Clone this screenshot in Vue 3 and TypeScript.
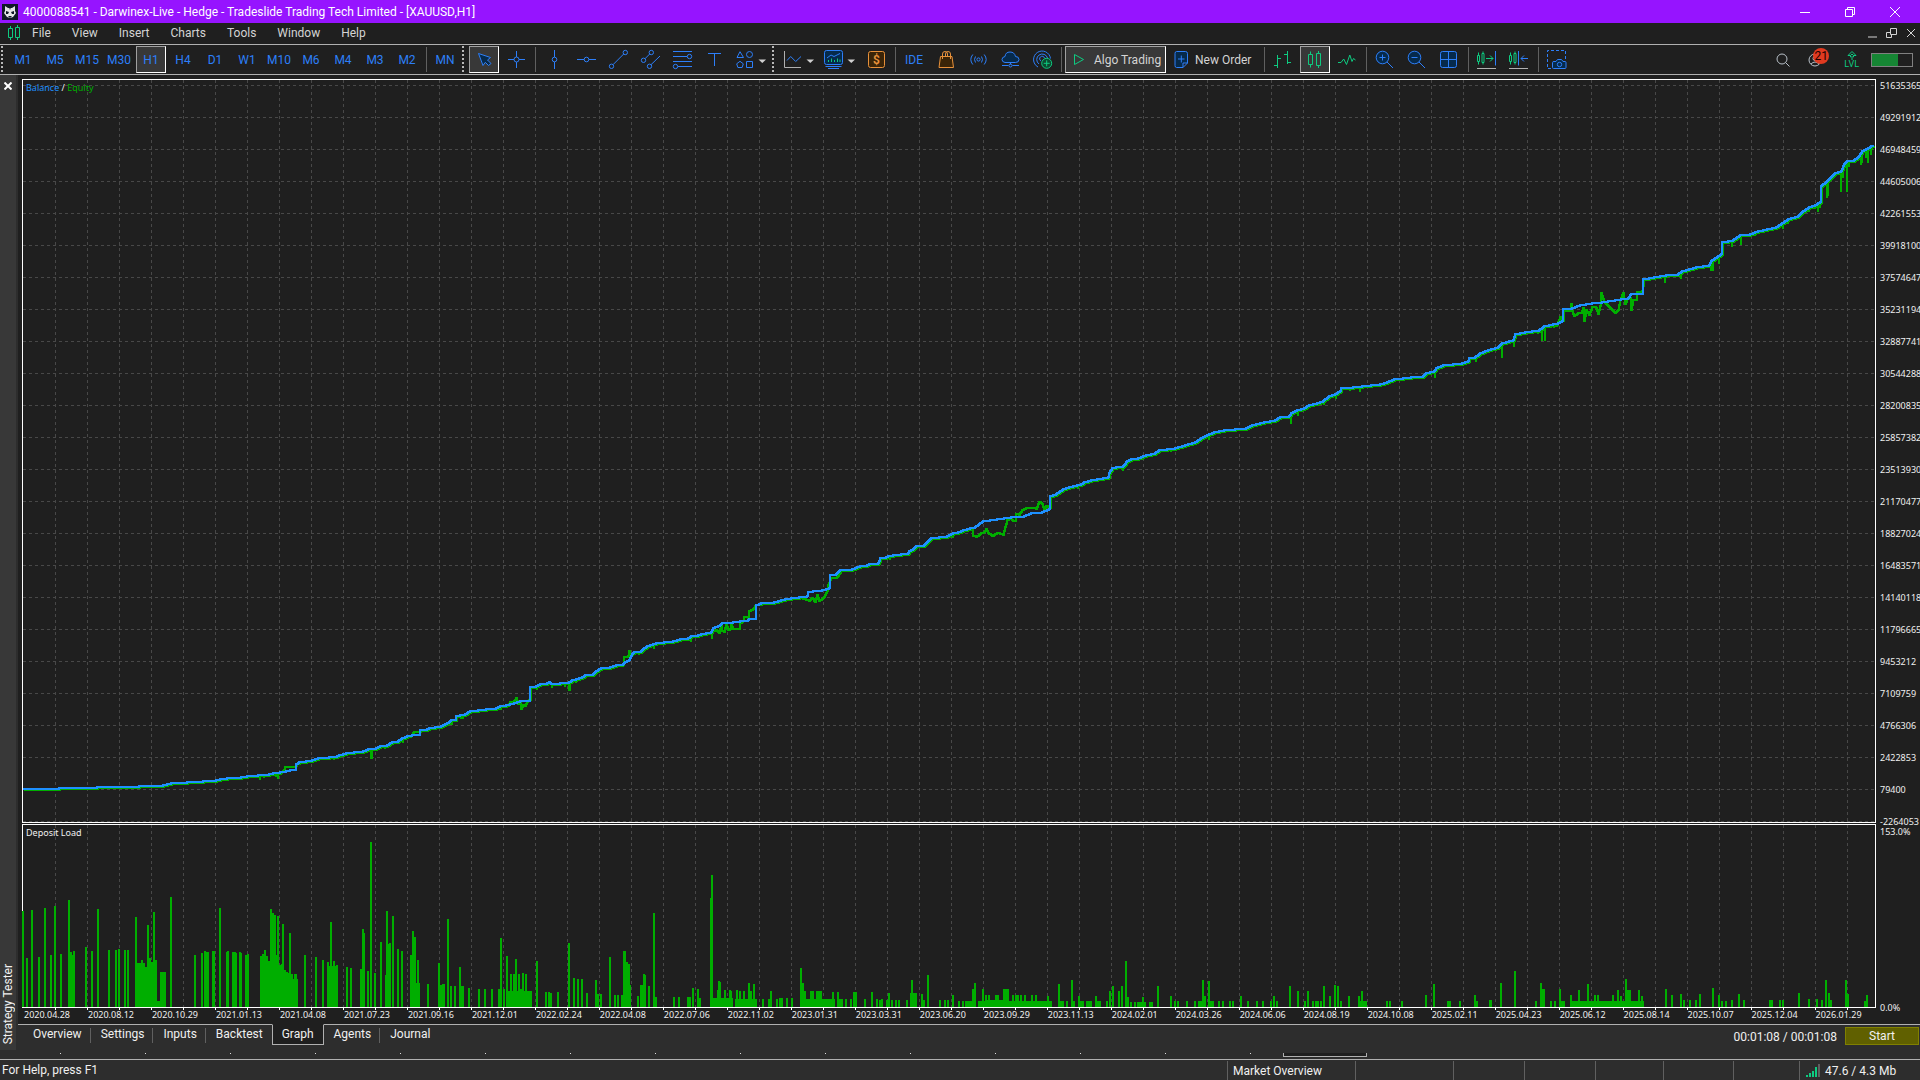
<script setup lang="ts">
type Point = [number, number]

const menus = ['File', 'View', 'Insert', 'Charts', 'Tools', 'Window', 'Help']
const timeframes = ['M1', 'M5', 'M15', 'M30', 'H1', 'H4', 'D1', 'W1', 'M10', 'M6', 'M4', 'M3', 'M2']
const tabs = ['Overview', 'Settings', 'Inputs', 'Backtest', 'Graph', 'Agents', 'Journal']

const scale = [
  51635365, 49291912, 46948459, 44605006, 42261553, 39918100, 37574647, 35231194, 32887741, 30544288, 28200835,
  25857382, 23513930, 21170477, 18827024, 16483571, 14140118, 11796665, 9453212, 7109759, 4766306, 2422853, 79400,
  -2264053,
]
const dates = [
  '2020.04.28', '2020.08.12', '2020.10.29', '2021.01.13', '2021.04.08', '2021.07.23', '2021.09.16', '2021.12.01',
  '2022.02.24', '2022.04.08', '2022.07.06', '2022.11.02', '2023.01.31', '2023.03.31', '2023.06.20', '2023.09.29',
  '2023.11.13', '2024.02.01', '2024.03.26', '2024.06.06', '2024.08.19', '2024.10.08', '2025.02.11', '2025.04.23',
  '2025.06.12', '2025.08.14', '2025.10.07', '2025.12.04', '2026.01.29',
]

const columns = Array.from({ length: 58 }, (_, i) => 55.5 + i * 32).filter((x) => x < 1875)
const rows = Array.from({ length: 24 }, (_, i) => 85.5 + i * 32)

const balance: Point[] = [
  [23, 789], [58, 789], [59, 788], [97, 787], [139, 786], [163, 785], [167, 784], [171, 783], [187, 782], [203, 781],
  [216, 780], [220, 779], [227, 778], [241, 777], [247, 776], [258, 775], [269, 774], [273, 773], [280, 772],
  [286, 771], [290, 770], [296, 770], [296, 764], [299, 762], [306, 761], [312, 760], [318, 758], [329, 757],
  [337, 756], [339, 755], [346, 753], [354, 752], [363, 751], [368, 749], [376, 748], [380, 746], [387, 745],
  [392, 742], [398, 741], [402, 738], [407, 736], [412, 735], [419, 735], [420, 730], [427, 729], [429, 728],
  [435, 727], [441, 726], [445, 724], [449, 722], [451, 720], [456, 720], [456, 716], [460, 715], [465, 714],
  [470, 711], [478, 710], [486, 709], [496, 708], [500, 706], [506, 705], [514, 703], [520, 701], [530, 701],
  [530, 687], [536, 686], [540, 684], [547, 683], [549, 682], [551, 684], [560, 683], [569, 682], [572, 680],
  [576, 679], [582, 677], [585, 675], [593, 674], [596, 671], [601, 668], [610, 667], [616, 665], [623, 664],
  [625, 662], [629, 660], [632, 654], [634, 652], [640, 652], [643, 649], [647, 646], [656, 643], [664, 642],
  [673, 641], [680, 639], [688, 638], [691, 636], [698, 635], [701, 634], [711, 632], [713, 628], [720, 625],
  [722, 623], [733, 622], [740, 621], [748, 620], [749, 619], [756, 618], [756, 605], [761, 603], [774, 602],
  [785, 599], [791, 598], [799, 597], [807, 596], [808, 592], [813, 591], [822, 590], [829, 588], [830, 575],
  [836, 574], [840, 570], [852, 569], [860, 566], [867, 565], [869, 564], [878, 563], [880, 558], [886, 557],
  [888, 556], [893, 555], [908, 553], [909, 551], [913, 549], [916, 546], [924, 545], [929, 540], [931, 538],
  [947, 536], [953, 533], [958, 532], [963, 530], [970, 528], [975, 527], [979, 524], [983, 521], [990, 520],
  [997, 519], [1011, 517], [1024, 516], [1031, 513], [1042, 512], [1049, 509], [1050, 496], [1056, 494],
  [1063, 489], [1069, 487], [1081, 484], [1084, 482], [1091, 480], [1097, 479], [1108, 477], [1109, 473],
  [1112, 468], [1116, 467], [1123, 466], [1127, 461], [1131, 459], [1138, 458], [1146, 455], [1155, 453],
  [1159, 450], [1175, 448], [1185, 445], [1195, 442], [1201, 438], [1209, 434], [1214, 432], [1224, 430],
  [1246, 428], [1252, 425], [1264, 422], [1275, 420], [1280, 417], [1289, 416], [1291, 413], [1297, 410],
  [1304, 408], [1309, 405], [1317, 403], [1323, 401], [1329, 396], [1335, 394], [1340, 391], [1341, 388],
  [1353, 387], [1362, 386], [1380, 384], [1387, 382], [1394, 379], [1411, 377], [1423, 376], [1426, 373],
  [1434, 371], [1436, 368], [1443, 365], [1462, 363], [1468, 361], [1469, 358], [1475, 357], [1480, 353],
  [1488, 350], [1498, 347], [1502, 343], [1509, 341], [1513, 340], [1515, 334], [1525, 332], [1539, 330],
  [1544, 326], [1558, 323], [1562, 321], [1563, 309], [1572, 308], [1580, 305], [1592, 303], [1602, 302],
  [1621, 299], [1628, 298], [1631, 294], [1643, 293], [1643, 279], [1654, 277], [1666, 275], [1678, 274],
  [1682, 271], [1696, 267], [1709, 265], [1711, 261], [1718, 256], [1721, 254], [1722, 242], [1733, 240],
  [1740, 235], [1747, 235], [1758, 231], [1776, 227], [1784, 222], [1788, 219], [1798, 216], [1803, 211],
  [1809, 207], [1815, 205], [1820, 202], [1821, 186], [1827, 181], [1835, 173], [1841, 171], [1844, 164],
  [1847, 161], [1854, 160], [1859, 156], [1862, 151], [1868, 148], [1873, 145],
]

// Stretches where floating profit pulls equity away from the balance curve.
const divergences: Point[][] = [
  [[281, 773], [284, 770], [285, 767], [295, 767], [297, 764]],
  [[411, 736], [414, 732], [421, 731]],
  [[508, 706], [510, 702], [514, 701], [516, 698], [518, 704], [520, 703], [521, 709], [523, 705], [525, 706], [527, 702], [529, 700], [531, 700], [531, 688]],
  [[622, 666], [624, 664], [624, 657], [628, 656], [629, 651], [630, 657], [633, 654]],
  [[713, 631], [716, 630], [719, 633], [721, 625], [722, 631], [724, 632], [726, 624], [728, 630], [730, 629], [731, 625], [733, 629], [739, 629], [740, 623], [743, 621], [744, 617], [748, 618], [749, 611], [753, 609], [756, 605], [758, 605]],
  [[800, 598], [803, 599], [809, 601], [812, 598], [815, 602], [817, 595], [819, 601], [824, 597], [827, 591], [828, 585], [831, 578], [837, 577], [841, 571]],
  [[971, 530], [973, 530], [973, 536], [976, 537], [981, 533], [984, 532], [986, 529], [988, 533], [992, 536], [997, 533], [1003, 535], [1005, 527], [1007, 520], [1011, 518], [1013, 521], [1015, 521], [1016, 514], [1019, 515], [1022, 510], [1026, 508], [1032, 508], [1036, 509], [1039, 502], [1042, 504], [1044, 509], [1046, 506], [1050, 508], [1051, 497]],
  [[1557, 325], [1560, 317], [1563, 321], [1564, 311], [1570, 311], [1571, 304], [1572, 311], [1574, 316], [1578, 313], [1581, 313], [1583, 308], [1584, 321], [1586, 310], [1589, 315], [1592, 307], [1596, 308], [1598, 314], [1600, 306], [1601, 293], [1604, 302], [1609, 307], [1613, 311], [1615, 313], [1618, 310], [1620, 300], [1623, 293], [1625, 304], [1627, 299], [1630, 298], [1631, 310], [1633, 300], [1636, 300], [1637, 292], [1642, 291], [1644, 280]],
]

const dips: Point[] = [
  [260, 780], [264, 778], [276, 777], [278, 779], [307, 764], [324, 760], [334, 760], [371, 759], [372, 759], [385, 749],
  [399, 744], [403, 743], [452, 725], [461, 719], [463, 719], [501, 710], [537, 690], [552, 688], [565, 687],
  [569, 691], [570, 691], [576, 683], [593, 677], [639, 655], [654, 649], [691, 642], [712, 639], [890, 560],
  [953, 538], [1078, 489], [1123, 471], [1171, 452], [1209, 440], [1291, 424], [1298, 416], [1324, 405], [1336, 399],
  [1350, 391], [1360, 392], [1435, 378], [1476, 362], [1502, 358], [1514, 347], [1538, 334], [1542, 341], [1545, 341],
  [1554, 328], [1665, 283], [1681, 279], [1711, 271], [1713, 271], [1719, 264], [1732, 247], [1741, 245], [1755, 236],
  [1777, 230], [1783, 229], [1788, 224], [1798, 218], [1803, 215], [1809, 212], [1815, 209], [1818, 212], [1820, 208],
  [1827, 198], [1828, 196], [1833, 178], [1841, 192], [1843, 178], [1847, 192], [1849, 167], [1856, 162], [1861, 165],
  [1862, 163], [1866, 158], [1868, 163], [1871, 155], [1872, 150],
]

function heightAt(x: number): number {
  const next = balance.findIndex((p) => p[0] >= x)
  if (next <= 0) return balance[0][1]
  const [x0, y0] = balance[next - 1]
  const [x1, y1] = balance[next]
  return x1 === x0 ? y1 : y0 + ((y1 - y0) * (x - x0)) / (x1 - x0)
}

function toStairs(points: Point[]): string {
  let path = `M${points[0][0]} ${points[0][1]}`
  for (let i = 1; i < points.length; i++) {
    const [x0, y0] = points[i - 1]
    const dx = points[i][0] - x0
    const dy = points[i][1] - y0
    const steps = Math.max(1, Math.min(Math.abs(dx), Math.abs(dy)))
    for (let k = 1; k <= steps; k++) {
      path += `H${Math.round(x0 + (dx * k) / steps)}V${Math.round(y0 + (dy * k) / steps)}`
    }
  }
  return path
}

const following = balance
  .filter(([x]) => !divergences.some((d) => x >= d[0][0] && x <= d[d.length - 1][0]))
  .map(([x, y]): Point => [x + 1, y + 1])
const equity = [...following, ...divergences.flat()].sort((a, b) => a[0] - b[0])

const balancePath = toStairs(balance)
const equityPath = toStairs(equity) + dips.map(([x, y]) => `M${x} ${Math.round(heightAt(x))}V${y}`).join('')

// Deposit load: [x, height] for single bars, [from, to, height] for solid stretches.
const loads: Point[] = [
  [22, 96], [26, 49], [31, 97], [38, 50], [44, 99], [50, 52], [54, 101], [60, 53], [68, 107], [70, 55], [73, 56],
  [85, 60], [91, 56], [97, 98], [108, 57], [115, 57], [118, 58], [124, 57], [127, 57], [135, 90], [137, 44],
  [139, 44], [141, 47], [143, 44], [147, 82], [149, 49], [151, 45], [153, 95], [155, 47], [170, 110], [194, 52],
  [201, 54], [204, 56], [212, 56], [213, 56], [219, 99], [226, 55], [227, 56], [232, 55], [234, 55], [235, 54],
  [239, 55], [240, 54], [245, 52], [247, 53], [260, 51], [262, 53], [264, 57], [266, 51], [268, 46], [270, 98],
  [272, 94], [274, 92], [276, 52], [277, 91], [279, 42], [281, 43], [282, 83], [284, 37], [286, 35], [288, 34],
  [289, 74], [291, 33], [294, 33], [295, 33], [304, 52], [315, 50], [322, 47], [327, 45], [330, 85], [333, 46],
  [336, 42], [346, 40], [350, 39], [360, 38], [362, 78], [363, 74], [367, 36], [370, 165], [374, 34], [380, 65],
  [385, 32], [386, 96], [388, 63], [389, 64], [392, 91], [397, 58], [401, 56], [410, 52], [412, 76], [414, 70],
  [417, 47], [427, 23], [438, 44], [440, 22], [442, 23], [443, 23], [447, 88], [450, 21], [454, 21], [459, 40],
  [461, 21], [462, 21], [468, 19], [478, 18], [484, 18], [491, 18], [498, 18], [500, 69], [503, 18], [506, 51],
  [510, 33], [513, 33], [515, 48], [518, 33], [520, 18], [522, 34], [525, 33], [536, 46], [545, 15], [548, 15],
  [550, 14], [557, 15], [568, 64], [573, 29], [577, 28], [581, 28], [586, 14], [595, 27], [597, 13], [600, 13],
  [609, 50], [614, 12], [617, 12], [621, 12], [623, 56], [624, 56], [626, 45], [628, 43], [629, 22], [637, 11],
  [640, 22], [641, 22], [643, 33], [644, 32], [648, 21], [653, 94], [655, 10], [673, 10], [678, 10], [687, 10],
  [689, 10], [692, 19], [697, 18], [699, 9], [710, 109], [711, 132], [717, 17], [718, 26], [719, 25], [724, 17],
  [729, 17], [730, 16], [736, 17], [739, 16], [743, 16], [748, 24], [750, 16], [753, 23], [762, 8], [768, 8],
  [770, 16], [776, 8], [779, 9], [781, 9], [786, 9], [791, 9], [800, 39], [802, 24], [804, 16], [810, 16],
  [812, 16], [816, 16], [818, 16], [820, 16], [832, 15], [837, 15], [839, 8], [841, 8], [845, 8], [850, 8],
  [853, 15], [855, 15], [864, 8], [871, 15], [876, 8], [879, 7], [881, 8], [886, 7], [888, 14], [891, 7], [895, 7],
  [898, 7], [906, 7], [910, 14], [911, 27], [913, 14], [915, 14], [921, 13], [923, 7], [927, 32], [939, 7],
  [944, 7], [947, 7], [952, 12], [958, 6], [962, 6], [972, 18], [974, 24], [982, 18], [985, 12], [988, 12],
  [995, 12], [997, 12], [1003, 18], [1005, 18], [1007, 18], [1012, 12], [1015, 12], [1017, 12], [1020, 12],
  [1024, 12], [1031, 12], [1035, 12], [1047, 11], [1058, 23], [1060, 6], [1062, 6], [1066, 6], [1071, 27],
  [1073, 6], [1078, 11], [1080, 6], [1082, 6], [1086, 6], [1088, 6], [1090, 6], [1095, 11], [1097, 6], [1099, 6],
  [1106, 6], [1109, 16], [1112, 21], [1118, 16], [1121, 21], [1125, 46], [1127, 10], [1130, 5], [1134, 5],
  [1142, 10], [1149, 5], [1151, 5], [1157, 21], [1170, 11], [1174, 6], [1177, 6], [1186, 6], [1194, 6], [1198, 6],
  [1200, 6], [1202, 27], [1204, 11], [1208, 26], [1210, 6], [1212, 6], [1218, 6], [1222, 6], [1229, 6], [1232, 6],
  [1240, 11], [1247, 6], [1256, 6], [1262, 6], [1270, 6], [1273, 11], [1276, 6], [1289, 21], [1297, 16], [1304, 6],
  [1307, 16], [1312, 6], [1315, 6], [1317, 6], [1320, 6], [1323, 21], [1329, 11], [1334, 22], [1337, 21], [1340, 6],
  [1348, 11], [1358, 11], [1361, 16], [1386, 6], [1389, 6], [1401, 6], [1425, 12], [1433, 23], [1447, 6], [1449, 6],
  [1459, 6], [1474, 12], [1476, 6], [1489, 7], [1490, 7], [1500, 24], [1514, 36], [1535, 6], [1540, 24], [1542, 18],
  [1543, 18], [1550, 6], [1554, 6], [1559, 18], [1561, 6], [1563, 6], [1570, 12], [1578, 17], [1587, 23],
  [1594, 12], [1597, 12], [1612, 12], [1617, 17], [1620, 11], [1625, 28], [1627, 17], [1629, 17], [1638, 17],
  [1641, 11], [1665, 18], [1671, 12], [1680, 13], [1683, 7], [1689, 7], [1695, 7], [1699, 13], [1712, 19],
  [1718, 12], [1721, 6], [1725, 6], [1731, 7], [1738, 13], [1743, 7], [1769, 7], [1771, 7], [1779, 7], [1782, 7],
  [1798, 14], [1808, 8], [1816, 8], [1821, 7], [1825, 27], [1828, 14], [1830, 7], [1845, 27], [1847, 13], [1864, 6],
  [1866, 12],
]
const plateaus: [number, number, number][] = [
  [68, 75, 52], [135, 157, 40], [157, 160, 6], [160, 166, 35], [204, 209, 55], [260, 298, 28], [327, 338, 41],
  [410, 420, 24], [506, 532, 16], [712, 733, 9], [735, 757, 8], [806, 835, 8], [965, 974, 6], [978, 987, 6],
  [987, 1009, 7], [1009, 1052, 6], [1137, 1146, 5], [1359, 1367, 6], [1570, 1644, 6],
]
const loadPath =
  loads.map(([x, h]) => `M${x} 1007v-${h}h2v${h}z`).join('') +
  plateaus.map(([a, b, h]) => `M${a} 1007v-${h}h${b - a}v${h}z`).join('')

const hiddenTabMarks = Array.from({ length: 15 }, (_, i) => i)
const emptyCells = [98, 71, 71, 68, 70, 66]
</script>

<template>
  <div class="terminal">
    <header class="title-bar">
      <svg class="logo" width="16" height="16" viewBox="0 0 16 16" aria-hidden="true">
        <rect width="16" height="16" fill="#101828" />
        <path d="M3 2l3 2h4l3-2v5l1 2-3 4-3 1-3-1-3-4 1-2z" fill="#e4e4e8" />
        <path d="M4 7l3 1-1 2H4zM12 7L9 8l1 2h2zM6 12h4l-2 2zM7 3h2l-1 3z" fill="#101828" />
      </svg>
      <h1>4000088541 - Darwinex-Live - Hedge - Tradeslide Trading Tech Limited - [XAUUSD,H1]</h1>
      <div class="window-controls">
        <button aria-label="Minimize"><svg width="12" height="12"><path d="M1 6.5h10" /></svg></button>
        <button aria-label="Restore"><svg width="12" height="12"><path d="M1.5 3.500h7v7h-7zM3.500 3.500v-2h7v7h-2" /></svg></button>
        <button aria-label="Close"><svg width="12" height="12"><path d="M1 1l10 10M11 1L1 11" /></svg></button>
      </div>
    </header>

    <nav class="menu-bar">
      <svg class="menu-logo" width="12" height="16" viewBox="0 0 12 16" aria-hidden="true">
        <path d="M.5 3.500h4v9h-4zM2.500 1v2.500M2.500 12.500V15M7.500 2.500h4v10h-4zM9.500 0v2.500M9.500 12.500V15" />
      </svg>
      <button v-for="menu in menus" :key="menu">{{ menu }}</button>
      <div class="child-controls">
        <button aria-label="Minimize chart"><svg width="10" height="10"><path d="M1 9h9" /></svg></button>
        <button aria-label="Restore chart"><svg width="11" height="11"><path d="M4.500.5h6v6h-6zM4.500 4.500h-4v5h5v-3" /></svg></button>
        <button aria-label="Close chart"><svg width="10" height="10"><path d="M1 1l8 8M9 1L1 9" /></svg></button>
      </div>
    </nav>

    <div class="toolbar">
      <i class="grip"></i>
      <button v-for="tf in timeframes" :key="tf" class="tool" :class="{ pressed: tf === 'H1' }">{{ tf }}</button>
      <i class="divider"></i>
      <button class="tool">MN</button>
      <i class="grip"></i>
      <button class="tool pressed" aria-label="Cursor">
        <svg viewBox="1 1 28 25"><path class="fill" d="M9.500 7.500l12 4-3 2.500 3.500 3.500-2.500 2-3.200-3.200-2.300 3.200z" /></svg>
      </button>
      <button class="tool" aria-label="Crosshair">
        <svg viewBox="1 1 28 25"><path d="M15.500 5v6M15.500 16v6M7 13.500h6M18 13.500h6" /><circle cx="15.500" cy="13.500" r="2.500" /></svg>
      </button>
      <i class="divider"></i>
      <button class="tool" aria-label="Vertical line">
        <svg viewBox="1 1 28 25"><path d="M15.500 4v7M15.500 16v7" /><circle cx="15.500" cy="13.500" r="2.300" /></svg>
      </button>
      <button class="tool" aria-label="Horizontal line">
        <svg viewBox="1 1 28 25"><path d="M6 13.500h7M18 13.500h7" /><circle cx="15.500" cy="13.500" r="2.300" /></svg>
      </button>
      <button class="tool" aria-label="Trendline">
        <svg viewBox="1 1 28 25"><path d="M10 18.700L20.700 8" /><circle cx="8.500" cy="20.300" r="2.200" /><circle cx="22.300" cy="6.500" r="2.200" /></svg>
      </button>
      <button class="tool" aria-label="Channel">
        <svg viewBox="1 1 28 25"><path d="M10 12.700L14.700 8M16 18.700l9-8.700" /><circle cx="8.500" cy="14.300" r="2.200" /><circle cx="16.300" cy="6.500" r="2.200" /><circle cx="14.500" cy="20.300" r="2.200" /></svg>
      </button>
      <button class="tool" aria-label="Fibonacci">
        <svg viewBox="1 1 28 25"><path d="M6 5.500h19M6 10.500h14M6 15.500h19M11 20.500h14" /><circle cx="22.500" cy="10.500" r="2.200" /><circle cx="8.500" cy="20.500" r="2.200" /></svg>
      </button>
      <button class="tool" aria-label="Text">
        <svg viewBox="1 1 28 25"><path d="M9 7.500h13M15.500 7.500V20" /></svg>
      </button>
      <button class="tool drop" aria-label="Shapes">
        <svg viewBox="1 1 37 25"><path d="M9 5.700L6 11.500h6.500zM15.500 15.500h6v6h-6zM9 15.300l3.300 2.500-1.200 3.700H6.900l-1.200-3.700z" /><circle cx="18.500" cy="8.500" r="3" /><path class="caret" d="M27.500 13.500h7.500L31.300 17z" /></svg>
      </button>
      <i class="grip"></i>
      <button class="tool drop" aria-label="Chart type">
        <svg viewBox="1 1 37 25"><path class="grey" d="M5.500 5v16.500H22" /><path d="M8 14.500l3.700-4 5 5 5.300-5" /><path class="caret" d="M27.500 13.500h7.500L31.300 17z" /></svg>
      </button>
      <button class="tool drop" aria-label="Indicators">
        <svg viewBox="1 1 37 25"><rect class="fill" x="4.500" y="4.500" width="18" height="14" rx="2" /><path d="M5.500 20.500h16M8 22.500h11M7 12l4-3 3 1.500L20 7.500" /><path class="green" d="M8.500 14v2M11.500 12.500v3.500M14.500 14v2M17.500 12.500v3.500M20 13.500v2.500" /><path class="caret" d="M27.500 13.500h7.500L31.300 17z" /></svg>
      </button>
      <button class="tool" aria-label="Market depth">
        <svg viewBox="1 1 28 25" class="orange"><rect x="7.500" y="5.500" width="16" height="16" rx="2" /><text x="15.500" y="18" text-anchor="middle">$</text></svg>
      </button>
      <i class="divider"></i>
      <button class="tool">IDE</button>
      <button class="tool" aria-label="Market">
        <svg viewBox="1 1 28 25" class="orange"><path d="M9.500 10.500h11.500l1.500 11h-14.500z" /><path class="handles" d="M11.500 13V8q0-2.500 2.500-2.500T16.500 8v2M14.500 10V8q0-2.500 2.500-2.500T19.500 8v5" /></svg>
      </button>
      <button class="tool" aria-label="Signals">
        <svg viewBox="1 1 28 25"><circle cx="15.500" cy="13.500" r="1.600" /><path d="M12.500 10.500q-2 3 0 6M18.500 10.500q2 3 0 6M9.800 8.500q-4 5 0 10M21.200 8.500q4 5 0 10" /></svg>
      </button>
      <button class="tool" aria-label="Virtual hosting">
        <svg viewBox="1 1 28 25"><path class="fill" d="M10 16.500q-3-.5-3-3t3-3q.5-4.500 5-4.500t5.500 4.500q3.500 0 3.500 3t-3.500 3z" /><path d="M15.500 16.500v2M7 19.500h6.500M17.500 19.500H24" /><circle cx="15.500" cy="19.500" r="1.500" /></svg>
      </button>
      <button class="tool" aria-label="Copy trading">
        <svg viewBox="1 1 28 25"><path d="M11 21a8.500 8.500 0 1 1 12.500-8.500M12 18a5.500 5.500 0 1 1 8.500-6M14 15a2.500 2.500 0 1 1 3.500-3" /><g class="green"><circle cx="19.700" cy="17.300" r="5" fill="#0c4a30" /><path d="M16.700 17.300h6M19.700 14.300v6" /></g></svg>
      </button>
      <i class="divider"></i>
      <button class="tool wide algo pressed">
        <svg viewBox="1 1 28 25" class="green"><path d="M9.500 8.500v10l9-5z" /></svg>
        <span>Algo Trading</span>
      </button>
      <button class="tool wide order">
        <svg viewBox="1 1 26 25"><path class="fill" d="M8.500 5.500h9q2 0 2 2V17l-4.500 4.500H8.500q-1.500 0-1.500-2v-12q0-2 1.500-2zM19.500 17H15v4.500" /><path d="M13.300 9.500v7M10 13h6.500" /></svg>
        <span>New Order</span>
      </button>
      <i class="divider"></i>
      <button class="tool" aria-label="Bars">
        <svg viewBox="1 1 28 25" class="green"><path d="M9.500 9v13M6 19.500h3.500M9.500 12.500h3.500M19.500 5v13M16 8.500h3.500M19.500 16.500h3.500" /></svg>
      </button>
      <button class="tool pressed" aria-label="Candlesticks">
        <svg viewBox="1 1 28 25" class="green"><path d="M8.500 8.500h4v10h-4zM10.500 5.500v3M10.500 18.500v3M16.500 7.500h4v12h-4zM18.500 5v2.500M18.500 19.500V22" /></svg>
      </button>
      <button class="tool" aria-label="Line chart">
        <svg viewBox="1 1 28 25" class="green"><path d="M6 16.500h3l2.700-3.500 2.800 5.500 3.300-9.500 2.200 6.500 1.500-3 2 1.500" /></svg>
      </button>
      <i class="divider"></i>
      <button class="tool" aria-label="Zoom in">
        <svg viewBox="1 1 28 25"><circle class="fill" cx="12.500" cy="11.500" r="6.300" /><path d="M17 16l6 6M9.500 11.500h6M12.500 8.500v6" /></svg>
      </button>
      <button class="tool" aria-label="Zoom out">
        <svg viewBox="1 1 28 25"><circle class="fill" cx="12.500" cy="11.500" r="6.300" /><path d="M17 16l6 6M9.500 11.500h6" /></svg>
      </button>
      <button class="tool" aria-label="Tile windows">
        <svg viewBox="1 1 28 25"><rect class="fill" x="6.500" y="5.500" width="16" height="16" rx="2" /><path d="M6.500 13.500h16M14.500 5.500v16" /></svg>
      </button>
      <i class="divider"></i>
      <button class="tool" aria-label="Chart shift">
        <svg viewBox="1 1 28 25"><path class="green" d="M5.500 9.500h2v6h-2zM6.500 6.500v3M6.500 15.500v3M10 7.500h2v9h-2zM11 5.500v2M11 16.500v2M14 12.500h7M18 9.500l3 3-3 3" /><path d="M23.500 5v14.500" /><path class="grey" d="M5 22.500h19" /></svg>
      </button>
      <button class="tool" aria-label="Auto scroll">
        <svg viewBox="1 1 28 25"><path class="green" d="M5.500 9.500h2v6h-2zM6.500 6.500v3M6.500 15.500v3M10 7.500h2v9h-2zM11 5.500v2M11 16.500v2" /><path d="M14.500 5v14.500M17 12.500h7M20 9.500l-3 3 3 3" /><path class="grey" d="M5 22.500h19" /></svg>
      </button>
      <i class="divider"></i>
      <button class="tool" aria-label="Screenshot">
        <svg viewBox="1 1 28 25"><path stroke-dasharray="3 2" d="M9 22.500H5.500v-18h18V13" /><path class="fill" d="M12 15.500h2l1.500-2h4l1.500 2h2q1 0 1 1v5q0 1-1 1H11.500q-1 0-1-1v-5q0-1 1.500-1z" /><circle cx="17.500" cy="18.500" r="2.200" /></svg>
      </button>

      <div class="account">
        <button aria-label="Search"><svg width="14" height="14"><circle cx="6" cy="6" r="5" /><path d="M9.500 9.500L13.500 13.500" /></svg></button>
        <button class="profile" aria-label="Notifications">
          <svg width="14" height="14"><circle cx="7" cy="7" r="6" /><circle cx="7" cy="5.500" r="2" /><path d="M3 11q4-4 8 0" /></svg>
          <span class="badge">21</span>
        </button>
        <button class="level">
          <svg width="10" height="9"><path d="M5 .5L9 4.500H6.500L5 3 3.500 4.500H1zM3.500 4.500V6h3V4.500M5 7v2" /></svg>
          <span>LVL</span>
        </button>
        <div class="battery"><i></i></div>
      </div>
    </div>

    <main class="tester">
      <aside class="side">
        <button aria-label="Close panel"><svg width="8" height="8"><path d="M.5.5l7 7M7.500.5l-7 7" /></svg></button>
        <span>Strategy Tester</span>
      </aside>

      <div class="panel">
        <div class="charts">
          <section class="chart equity-chart">
            <div class="plot">
              <svg viewBox="23 80 1852 742" preserveAspectRatio="none">
                <g class="gridlines">
                  <path v-for="x in columns" :key="'c' + x" :d="`M${x} 80V822`" />
                  <path v-for="y in rows" :key="'r' + y" :d="`M23 ${y}H1875`" />
                </g>
                <path class="equity" :d="equityPath" />
                <path class="balance" :d="balancePath" />
              </svg>
              <p class="legend"><b>Balance</b> / <em>Equity</em></p>
            </div>
            <ol class="scale">
              <li v-for="value in scale" :key="value">{{ value }}</li>
            </ol>
          </section>

          <section class="chart load-chart">
            <div class="plot">
              <svg viewBox="23 825 1852 182" preserveAspectRatio="none">
                <g class="gridlines">
                  <path v-for="x in columns" :key="x" :d="`M${x} 825V1007`" />
                </g>
                <path class="ticks" :d="columns.map((x) => `M${x} 1007v3`).join('')" />
                <path class="load" :d="loadPath" />
              </svg>
              <p class="legend">Deposit Load</p>
            </div>
            <ol class="scale ends">
              <li>153.0%</li>
              <li>0.0%</li>
            </ol>
          </section>

          <ol class="dates">
            <li v-for="date in dates" :key="date">{{ date }}</li>
          </ol>
        </div>

        <div class="tab-bar">
          <button v-for="tab in tabs" :key="tab" class="tab" :class="{ active: tab === 'Graph' }">{{ tab }}</button>
          <span class="timer">00:01:08 / 00:01:08</span>
          <button class="start">Start</button>
        </div>
      </div>
    </main>

    <div class="tucked">
      <i v-for="mark in hiddenTabMarks" :key="mark" class="mark"></i>
      <i class="sheet"></i>
    </div>

    <footer class="status">
      <span class="hint">For Help, press F1</span>
      <span class="cell market">Market Overview</span>
      <span v-for="(width, i) in emptyCells" :key="i" class="cell" :style="{ width: width + 'px' }"></span>
      <span class="cell traffic">
        <svg width="14" height="14" aria-hidden="true">
          <path d="M1 14v-2M4 14v-4M7 14V8M10 14V4" /><path class="off" d="M13 14V1" />
        </svg>
        47.6 / 4.3 Mb
      </span>
    </footer>
  </div>
</template>

<style>
body {
  margin: 0;
  background: #2d2d2d;
}
</style>

<style scoped>
.terminal {
  display: flex;
  flex-direction: column;
  min-height: 100vh;
  color: #f0f0f0;
  background: #2d2d2d;
  font-family: Roboto, "Noto Sans", sans-serif;
  font-size: 12px;
  line-height: 16px;
}

.terminal * {
  box-sizing: border-box;
}

button {
  padding: 0;
  border: 0;
  background: none;
  color: inherit;
  font: inherit;
}

svg {
  display: block;
  fill: none;
  stroke: currentColor;
}

ol,
p,
h1 {
  margin: 0;
  padding: 0;
  list-style: none;
  font: inherit;
}

.title-bar {
  display: flex;
  align-items: center;
  height: 23px;
  padding: 0 3px 0 2px;
  background: #9614ff;
  color: #fff;
}

.logo {
  stroke: none;
}

.title-bar h1 {
  margin-left: 5px;
  white-space: nowrap;
}

.window-controls,
.child-controls {
  display: flex;
  margin-left: auto;
}

.window-controls button {
  display: grid;
  place-items: center;
  width: 45px;
  height: 20px;
}

.menu-bar {
  display: flex;
  align-items: center;
  gap: 21px;
  height: 21px;
  padding: 0 4px 1px 8px;
  background: #1f1f1f;
  color: #d4d4d4;
}

.menu-logo {
  margin-right: -9px;
  color: #0ecb81;
}

.child-controls {
  gap: 9px;
}

.toolbar {
  display: flex;
  align-items: center;
  gap: 2px;
  height: 31px;
  padding: 0 7px 0 1px;
  border-top: 1px solid #b0b0b0;
  border-bottom: 1px solid #b0b0b0;
  background: #1f1f1f;
  color: #2d7ff9;
}

.grip {
  width: 2px;
  height: 28px;
  margin-right: 3px;
  background: repeating-linear-gradient(#b8b8b8 0 2px, transparent 2px 4px);
}

.divider {
  width: 1px;
  height: 25px;
  margin: 0 1px 0 2px;
  background: #606060;
}

.tool {
  display: flex;
  flex: none;
  align-items: center;
  justify-content: center;
  width: 30px;
  height: 27px;
  border: 1px solid transparent;
}

.tool svg {
  flex: none;
  width: 28px;
  height: 25px;
}

.tool.pressed {
  border-color: #a0a0a0 #fff #fff #a0a0a0;
  background: #383838;
}

.tool.drop {
  width: 39px;
}

.tool.drop svg {
  width: 37px;
}

.tool.wide {
  justify-content: flex-start;
  color: #d4d4d4;
}

.tool.algo {
  width: 101px;
}

.tool.order {
  width: 92px;
}

.tool.order svg {
  width: 26px;
  color: #2d7ff9;
}

.tool span {
  white-space: nowrap;
}

.fill {
  fill: #062a4c;
}

.green {
  stroke: #0ecb81;
}

.grey {
  stroke: #b0b0b0;
}

.caret {
  fill: #d0d0d0;
  stroke: none;
}

.orange {
  stroke: #e8913a;
  fill: #3a2408;
}

.orange .handles {
  fill: none;
}

.orange text {
  fill: #e8913a;
  stroke: none;
  font-size: 12px;
  font-weight: 600;
}

.account {
  display: flex;
  align-items: center;
  gap: 18px;
  margin-left: auto;
  color: #b8c0c8;
}

.profile {
  position: relative;
  margin-right: 4px;
}

.badge {
  position: absolute;
  top: -5px;
  left: 5px;
  width: 16px;
  height: 16px;
  border-radius: 8px;
  background: #e03a20;
  color: #200;
  text-align: center;
}

.level {
  display: flex;
  flex-direction: column;
  align-items: center;
  margin-right: -6px;
  color: #0ecb81;
  font-size: 9px;
  line-height: 8px;
}

.battery {
  width: 42px;
  height: 14px;
  border: 1px solid #808080;
}

.battery i {
  display: block;
  width: 65%;
  height: 100%;
  background: #168634;
}

.tester {
  display: flex;
  flex: 1;
}

.side {
  display: flex;
  flex-direction: column;
  align-items: center;
  justify-content: space-between;
  width: 16px;
  padding: 7px 0 6px;
  background: #383838;
}

.side svg {
  color: #fff;
  stroke-width: 2;
}

.side span {
  writing-mode: vertical-rl;
  transform: rotate(180deg);
}

.panel {
  display: flex;
  flex: 1;
  flex-direction: column;
  min-width: 0;
  margin-left: 2px;
}

.charts {
  display: flex;
  flex: 1;
  flex-direction: column;
  padding: 4px 0 0 4px;
  background: #1f1f1f;
  font-family: "Noto Sans", "Open Sans", sans-serif;
  font-size: 9px;
  line-height: 12px;
}

.chart {
  display: flex;
}

.equity-chart {
  flex: 744 1 0;
  min-height: 320px;
  margin-bottom: 1px;
}

.load-chart {
  flex: 184 1 0;
  min-height: 80px;
}

.plot {
  position: relative;
  flex: 1;
  min-width: 0;
  border: 1px solid #fff;
}

.plot svg {
  position: absolute;
  inset: 0;
  width: 100%;
  height: 100%;
  overflow: visible;
  shape-rendering: crispEdges;
}

.plot path {
  vector-effect: non-scaling-stroke;
}

.gridlines {
  stroke: #484848;
  stroke-dasharray: 3 3;
}

.equity {
  stroke: #00ae00;
  stroke-width: 2;
}

.balance {
  stroke: #1e90ff;
  stroke-width: 2;
}

.load {
  fill: #00ae00;
  stroke: none;
}

.ticks {
  stroke: #fff;
}

.legend {
  position: absolute;
  top: 2px;
  left: 3px;
}

.legend b {
  color: #1e90ff;
  font-weight: 400;
}

.legend em {
  color: #00ae00;
  font-style: normal;
}

.scale {
  display: flex;
  flex: none;
  flex-direction: column;
  width: 44px;
  margin: -9px 0 -15px;
  padding-left: 4px;
}

.scale li {
  display: flex;
  flex: 1;
  align-items: center;
  line-height: 8px;
}

.scale.ends {
  justify-content: space-between;
  margin: 4px 0 -4px;
}

.scale.ends li {
  flex: none;
}

.dates {
  display: flex;
  height: 16px;
  margin-right: 44px;
  padding: 1px 0 0 2px;
}

.dates li {
  flex: 0 0 3.455%;
  white-space: nowrap;
}

.tab-bar {
  display: flex;
  height: 26px;
  padding: 0 1px 0 5px;
  border-top: 1px solid #b0b0b0;
}

.tab {
  position: relative;
  height: 20px;
  padding: 0 9px 2px 10px;
}

.tab:not(.active)::after {
  content: "";
  position: absolute;
  top: 3px;
  right: 0;
  width: 1px;
  height: 15px;
  background: #606060;
}

.tab:has(+ .active)::after,
.tab:nth-child(7)::after {
  display: none;
}

.tab.active {
  margin-top: -1px;
  height: 21px;
  padding: 0 9px 1px;
  border: 1px solid #b0b0b0;
  border-top-color: #1f1f1f;
  background: #1f1f1f;
}

.timer {
  margin: 4px 8px 0 auto;
}

.start {
  width: 74px;
  height: 18px;
  margin-top: 2px;
  border: 1px solid #808000;
  background: #606000;
  line-height: 14px;
}

.tucked {
  display: flex;
  align-items: flex-start;
  height: 9px;
  padding: 3px 0 0 60px;
}

.mark {
  width: 1px;
  height: 1px;
  margin-right: 84px;
  background: #e0e0e0;
}

.mark:nth-last-child(2) {
  margin-right: 32px;
}

.sheet {
  width: 84px;
  height: 4px;
  border: 1px solid #b0b0b0;
  border-top: 0;
  background: #1f1f1f;
}

.status {
  display: flex;
  height: 21px;
  padding-left: 2px;
  border-top: 1px solid #b0b0b0;
  line-height: 20px;
}

.hint {
  flex: 1;
}

.cell {
  margin-top: 1px;
  height: 19px;
  border-left: 1px solid #606060;
}

.market {
  width: 128px;
  padding-left: 5px;
}

.traffic {
  display: flex;
  gap: 5px;
  width: 121px;
  padding-left: 6px;
}

.traffic svg {
  margin-top: 2px;
  color: #0ecb81;
  stroke-width: 2;
}

.traffic .off {
  stroke: #606060;
}
</style>
